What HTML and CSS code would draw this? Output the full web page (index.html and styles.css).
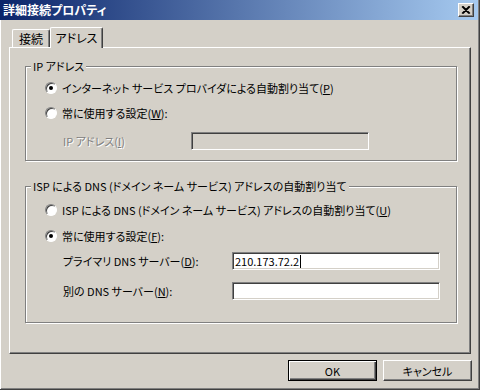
FILE: index.html
```html
<!DOCTYPE html>
<html lang="ja">
<head>
<meta charset="utf-8">
<title>詳細接続プロパティ</title>
<link rel="stylesheet" href="styles.css">
</head>
<body>
<div class="window">
  <div class="titlebar">
    <span class="title">詳細接続プロパティ</span>
    <span class="close">
      <svg width="16" height="14" viewBox="0 0 16 14">
        <path d="M4 3.5 L11 10.5 M5 3.5 L12 10.5 M11 3.5 L4 10.5 M12 3.5 L5 10.5" stroke="#000" stroke-width="1.2" fill="none"/>
      </svg>
    </span>
  </div>
  <div class="content">
    <div class="tabs">
      <div class="tab">接続</div>
      <div class="tab active">アドレス</div>
    </div>
    <div class="panel">
      <div class="group g1">
        <div class="group-title">IP アドレス</div>
        <div class="row"><span class="radio on"></span><span>インターネット サービス プロバイダによる自動割り当て(<u>P</u>)</span></div>
        <div class="row gap5"><span class="radio"></span><span>常に使用する設定(<u>W</u>):</span></div>
        <div class="field gap9"><span class="label ip-label disabled">IP アドレス(<u>I</u>)</span><span class="input ip-input off"></span></div>
      </div>
      <div class="group g2">
        <div class="group-title">ISP による DNS (ドメイン ネーム サービス) アドレスの自動割り当て</div>
        <div class="row"><span class="radio"></span><span>ISP による DNS (ドメイン ネーム サービス) アドレスの自動割り当て(<u>U</u>)</span></div>
        <div class="row gap6"><span class="radio on"></span><span>常に使用する設定(<u>F</u>):</span></div>
        <div class="field gap6"><span class="label dns-label">プライマリ DNS サーバー(<u>D</u>):</span><span class="input dns-input">210.173.72.2<span class="caret"></span></span></div>
        <div class="field gap12"><span class="label dns-label">別の DNS サーバー(<u>N</u>):</span><span class="input dns-input"></span></div>
      </div>
    </div>
    <div class="buttons">
      <span class="btn default">OK</span>
      <span class="btn">キャンセル</span>
    </div>
  </div>
</div>
</body>
</html>
```
FILE: styles.css
```css
* { box-sizing: border-box; }

html, body {
  margin: 0;
  padding: 0;
}

body {
  width: 480px;
  height: 390px;
  overflow: hidden;
  background: #D4D0C8;
  font-family: "Noto Sans CJK JP", "Noto Sans", sans-serif;
  font-size: 11px;
  font-feature-settings: "palt";
  color: #000;
}

.window {
  width: 480px;
  height: 390px;
  display: flex;
  flex-direction: column;
  background: #D4D0C8;
  border-right: 1px solid #404040;
  border-bottom: 1px solid #404040;
  box-shadow: inset 1px 0 0 #fff, inset -1px -1px 0 #808080;
}

.titlebar {
  height: 20px;
  margin-right: 1px;
  display: flex;
  align-items: center;
  justify-content: space-between;
  padding: 0 4px 0 3px;
  background: linear-gradient(to right, #0A246A, #A6CAF0);
}

.title {
  color: #fff;
  font-weight: bold;
  font-size: 12px;
  line-height: 14px;
}

.close {
  width: 16px;
  height: 14px;
  display: block;
  background: #D4D0C8;
  border-top: 1px solid #fff;
  border-left: 1px solid #fff;
  border-right: 1px solid #404040;
  border-bottom: 1px solid #404040;
  box-shadow: inset -1px -1px 0 #808080;
  position: relative;
}

.close svg {
  position: absolute;
  left: -1px;
  top: -1px;
}

.content {
  flex: 1;
  display: flex;
  flex-direction: column;
  padding: 0 8px 0 9px;
}

.tabs {
  display: flex;
  align-items: flex-end;
  height: 20px;
  margin-top: 7px;
  padding-left: 3px;
  position: relative;
  z-index: 1;
}

.tab {
  height: 18px;
  width: 38px;
  display: flex;
  align-items: center;
  justify-content: center;
  border-top: 1px solid #fff;
  border-left: 1px solid #fff;
  border-right: 1px solid #404040;
  box-shadow: inset -1px 0 0 #808080;
  border-radius: 2px 2px 0 0;
  background: #D4D0C8;
  line-height: 14px;
  padding-top: 1px;
  font-size: 12px;
}

.tab.active {
  width: 53px;
  height: 21px;
  margin-bottom: -1px;
  padding-bottom: 2px;
}

.panel {
  height: 307px;
  border-top: 1px solid #fff;
  border-left: 1px solid #fff;
  border-right: 1px solid #404040;
  border-bottom: 1px solid #404040;
  box-shadow: inset -1px -1px 0 #808080;
  padding: 18px 13px 0 15px;
}

.group {
  position: relative;
  border: 1px solid #808080;
  box-shadow: inset 1px 1px 0 #fff, 1px 1px 0 #fff;
}

.g1 { padding: 11px 0 10px 0; }
.g2 { margin-top: 25px; padding: 13px 0 22px 0; }

.group-title {
  position: absolute;
  top: -8px;
  left: 5px;
  padding: 0 2px;
  background: #D4D0C8;
  line-height: 14px;
  white-space: nowrap;
}

.row {
  height: 20px;
  display: flex;
  align-items: center;
  padding-left: 19px;
  gap: 5px;
  white-space: nowrap;
  line-height: 14px;
}

.gap5 { margin-top: 5px; }
.gap6 { margin-top: 6px; }
.gap9 { margin-top: 9px; }
.gap12 { margin-top: 12px; }

.radio {
  width: 12px;
  height: 12px;
  flex: none;
  border-radius: 50%;
  background: #fff;
  border: 1px solid;
  border-color: #808080 #fff #fff #808080;
  box-shadow: inset 1px 1px 0 #404040;
  position: relative;
}

.radio.on::after {
  content: "";
  position: absolute;
  left: 3px;
  top: 3px;
  width: 4px;
  height: 4px;
  border-radius: 50%;
  background: #000;
}

.field {
  height: 18px;
  display: flex;
  align-items: center;
  padding-left: 37px;
  white-space: nowrap;
  line-height: 14px;
}

.label { flex: none; }
.ip-label { width: 128px; }
.dns-label { width: 169px; }

.disabled {
  color: #808080;
  text-shadow: 1px 1px 0 #fff;
}

.input {
  height: 18px;
  display: flex;
  align-items: center;
  padding-left: 1px;
  background: #fff;
  border: 1px solid;
  border-color: #808080 #fff #fff #808080;
  box-shadow: inset 1px 1px 0 #404040, inset -1px -1px 0 #D4D0C8;
  line-height: 14px;
  font-size: 11px;
}

.input.off { background: #D4D0C8; }
.ip-input { width: 178px; }
.dns-input { width: 208px; padding-left: 2px; }

.caret {
  display: inline-block;
  width: 1px;
  height: 13px;
  background: #000;
  margin-left: 1px;
}

.buttons {
  display: flex;
  justify-content: flex-end;
  gap: 6px;
  margin-top: 6px;
  margin-right: -1px;
}

.btn {
  width: 89px;
  height: 21px;
  display: flex;
  align-items: center;
  justify-content: center;
  background: #D4D0C8;
  border: 1px solid;
  border-color: #fff #404040 #404040 #fff;
  box-shadow: inset -1px -1px 0 #808080;
  line-height: 14px;
}

.btn.default {
  border-color: #000;
  box-shadow: inset 1px 1px 0 #fff, inset -1px -1px 0 #404040, inset -2px -2px 0 #808080;
}
```
